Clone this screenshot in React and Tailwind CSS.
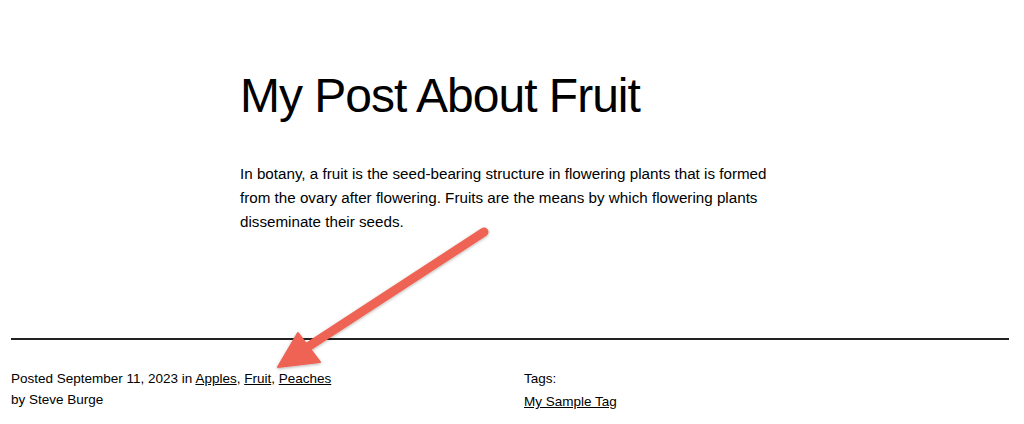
export default function App() {
  return (
    <div className="relative w-[1024px] h-[424px] bg-white text-black overflow-hidden" style={{ fontFamily: '"Liberation Sans", Arial, sans-serif' }}>
      <div className="pl-[240px] pt-[66px]">
        <h1 className="text-[48px] leading-[60px] font-normal tracking-[-1px]">My Post About Fruit</h1>
        <p className="mt-[36px] w-[540px] text-[15.2px] leading-[24px]">
          In botany, a fruit is the seed-bearing structure in flowering plants that is formed from the ovary after flowering. Fruits are the means by which flowering plants disseminate their seeds.
        </p>
      </div>

      <div className="ml-[11px] mr-[15px] mt-[104px] border-t-2 border-[#222]" />

      <div className="ml-[11px] mr-[15px] mt-[28px] grid grid-cols-2 gap-[28px] text-[13.5px]">
        <div className="leading-[21px]">
          <p>
            Posted September 11, 2023 in <a className="underline">Apples</a>, <a className="underline">Fruit</a>, <a className="underline">Peaches</a>
          </p>
          <p>by Steve Burge</p>
        </div>
        <div className="leading-[21px]">
          <p>Tags:</p>
          <p className="mt-[2px]"><a className="underline">My Sample Tag</a></p>
        </div>
      </div>

      <svg className="absolute left-0 top-0 pointer-events-none" width="1024" height="424" viewBox="0 0 1024 424">
        <defs>
          <filter id="sh" x="-10%" y="-10%" width="120%" height="120%">
            <feDropShadow dx="0" dy="1" stdDeviation="1.5" floodColor="#000" floodOpacity="0.3" />
          </filter>
        </defs>
        <g filter="url(#sh)" fill="#ee6352" stroke="#ee6352">
          <line x1="484" y1="232" x2="300" y2="352" strokeWidth="9" strokeLinecap="round" />
          <polygon points="278,367 298,333 320,362" strokeWidth="2" strokeLinejoin="round" />
        </g>
      </svg>
    </div>
  )
}
